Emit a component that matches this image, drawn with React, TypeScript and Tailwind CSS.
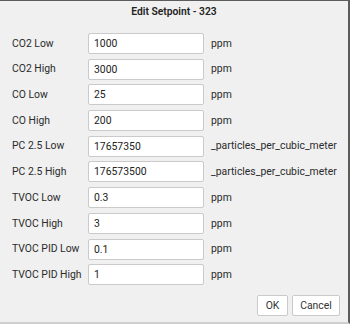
const rows = [
  { label: "CO2 Low", value: "1000", unit: "ppm" },
  { label: "CO2 High", value: "3000", unit: "ppm" },
  { label: "CO Low", value: "25", unit: "ppm" },
  { label: "CO High", value: "200", unit: "ppm" },
  { label: "PC 2.5 Low", value: "17657350", unit: "_particles_per_cubic_meter" },
  { label: "PC 2.5 High", value: "176573500", unit: "_particles_per_cubic_meter" },
  { label: "TVOC Low", value: "0.3", unit: "ppm" },
  { label: "TVOC High", value: "3", unit: "ppm" },
  { label: "TVOC PID Low", value: "0.1", unit: "ppm" },
  { label: "TVOC PID High", value: "1", unit: "ppm" },
];

export default function App() {
  return (
    <div
      className="w-[350px] h-[324px] bg-[#f0f0f0] border-t border-t-[#5c5c5c] border-r-2 border-r-[#5c5c5c] border-b-2 border-b-[#cfcfcf] flex flex-col text-[#2b2b2b]"
      style={{ fontFamily: "Roboto, 'Liberation Sans', sans-serif" }}
    >
      <div className="h-[21px] flex items-center justify-center text-[10.3px] font-semibold text-[#222]">
        Edit Setpoint - 323
      </div>
      <div className="mt-[11px] flex flex-col gap-[4.7px] pl-3">
        {rows.map((r) => (
          <div key={r.label} className="flex items-center h-[21px] text-[10.4px]">
            <span className="w-[76px] shrink-0">{r.label}</span>
            <input
              readOnly
              value={r.value}
              className="w-[116px] h-[21px] bg-white border border-[#cacaca] rounded-[2px] px-[5px] text-[10.4px] text-[#222] outline-none"
            />
            <span className="ml-[7px]">{r.unit}</span>
          </div>
        ))}
      </div>
      <div className="mt-auto mb-[6px] flex justify-end gap-[4px] pr-[8px]">
        <button className="h-[21px] w-[31px] bg-white border border-[#cacaca] rounded-[2px] text-[10.4px] text-[#333]">
          OK
        </button>
        <button className="h-[21px] w-[48px] bg-white border border-[#cacaca] rounded-[2px] text-[10.4px] text-[#333]">
          Cancel
        </button>
      </div>
    </div>
  );
}
